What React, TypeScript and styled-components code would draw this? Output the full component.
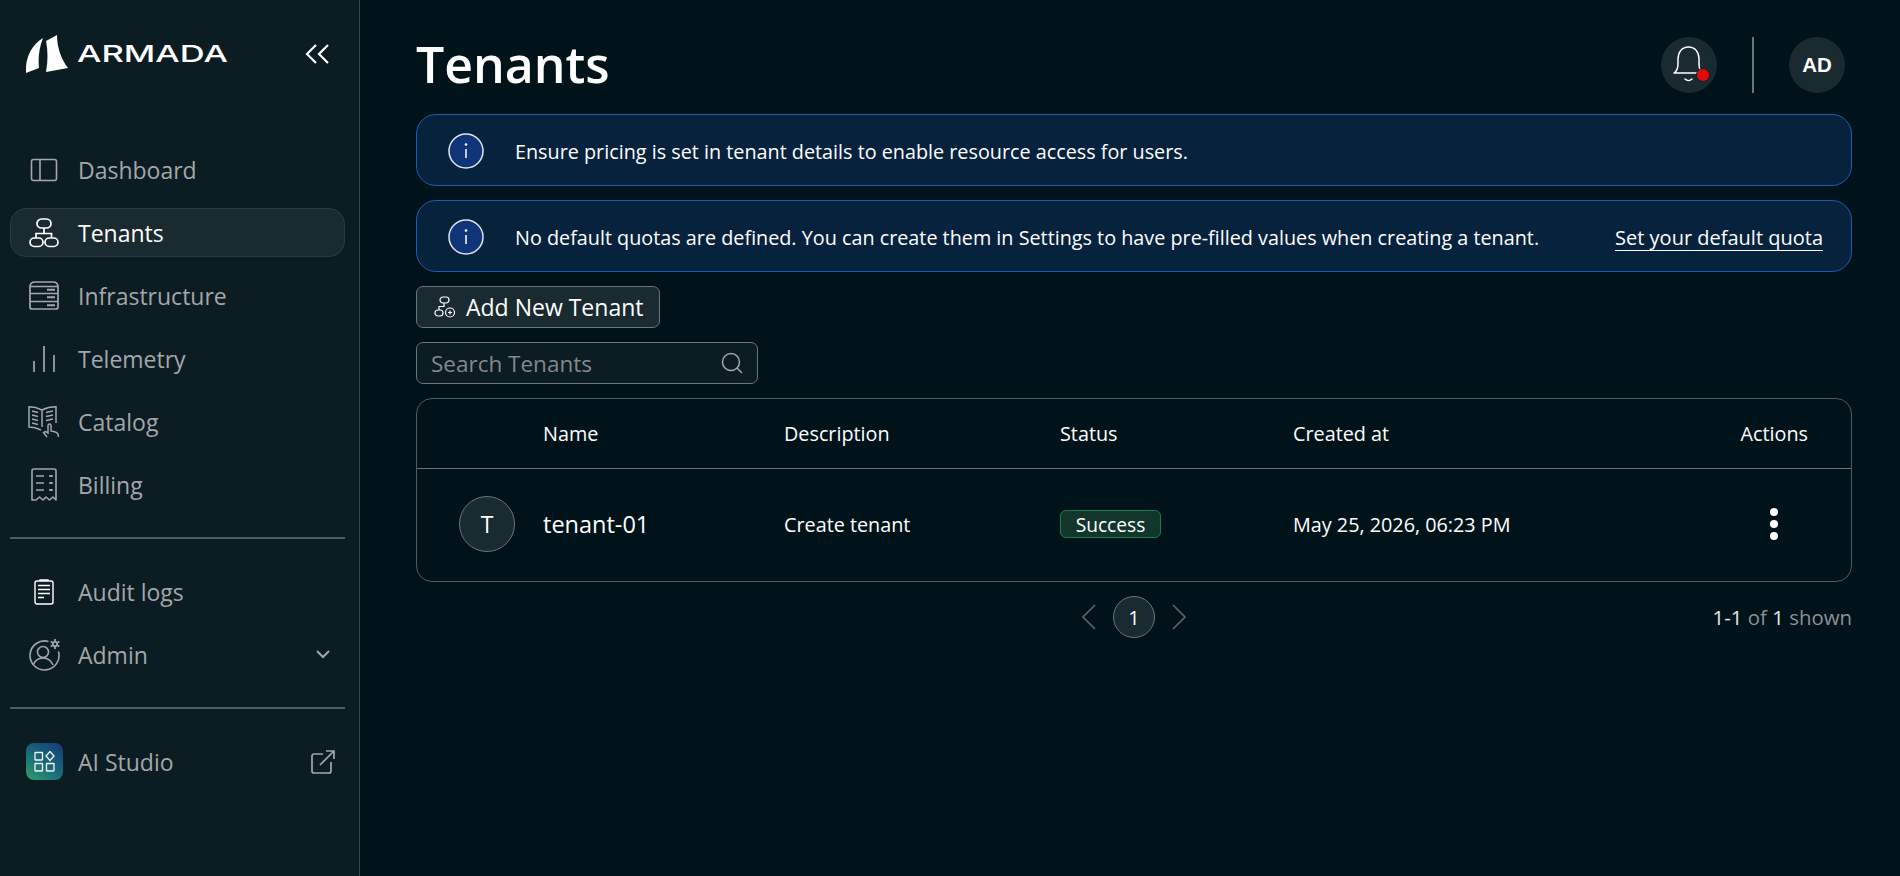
import React from 'react';
import styled, { createGlobalStyle } from 'styled-components';

const font = `"Open Sans", "Noto Sans", sans-serif`;

const GlobalStyle = createGlobalStyle`
  html, body {
    margin: 0;
    padding: 0;
    height: 100%;
    background: #01131a;
    font-family: ${font};
    color: #fff;
  }
  * { box-sizing: border-box; }
`;

const Page = styled.div`
  display: flex;
  width: 1900px;
  height: 876px;
  overflow: hidden;
`;

const Sidebar = styled.aside`
  width: 360px;
  flex-shrink: 0;
  padding: 0 14px 0 10px;
  background: #0c1c23;
  border-right: 1px solid #3b464b;
`;

const LogoRow = styled.div`
  display: flex;
  align-items: center;
  height: 108px;
  margin-bottom: 37px;
  padding: 0 16px;
`;

const LogoText = styled.span`
  display: inline-block;
  width: 104px;
  margin-left: 8px;
  font-family: Inter, "Liberation Sans", sans-serif;
  font-weight: 500;
  font-size: 23px;
  line-height: 1;
  transform: scaleX(1.5);
  transform-origin: left center;
`;

const Collapse = styled.button`
  display: flex;
  margin-left: auto;
  padding: 0;
  border: 0;
  background: none;
`;

const NavList = styled.nav`
  display: flex;
  flex-direction: column;
  gap: 14px;
`;

const NavItem = styled.div<{ $active?: boolean }>`
  display: flex;
  align-items: center;
  height: 49px;
  padding: 0 9px 0 9px;
  border: 1px solid ${p => (p.$active ? '#2e3a40' : 'transparent')};
  border-radius: 16px;
  background: ${p => (p.$active ? '#1a2a31' : 'transparent')};
  color: ${p => (p.$active ? '#ffffff' : '#a3a7a9')};
  font-size: 23px;
`;

const NavIcon = styled.span`
  display: flex;
  justify-content: center;
  align-items: center;
  width: 48px;
  margin-right: 10px;
`;

const NavLabel = styled.span`
  flex: 1;
`;

const Divider = styled.hr`
  margin: 28px 0;
  border: 0;
  border-top: 2px solid #545b5f;
`;

const Main = styled.main`
  flex: 1;
  display: flex;
  flex-direction: column;
  gap: 14px;
  padding: 37px 48px 0 56px;
`;

const Header = styled.header`
  display: flex;
  align-items: center;
  height: 56px;
  margin-bottom: 7px;
  padding-right: 7px;
`;

const Title = styled.h1`
  flex: 1;
  margin: 0 0 2px;
  font-size: 50px;
  font-weight: 600;
  line-height: 54px;
`;

const RoundButton = styled.div`
  position: relative;
  display: flex;
  justify-content: center;
  align-items: center;
  width: 56px;
  height: 56px;
  border-radius: 50%;
  background: #1a2a31;
  font-family: "Liberation Sans", sans-serif;
  font-weight: 700;
  font-size: 20.5px;
`;

const HeaderRule = styled.div`
  width: 2px;
  height: 56px;
  margin: 0 35px;
  background: #6d7477;
`;

const Alert = styled.div`
  display: flex;
  align-items: center;
  height: 72px;
  padding: 2px 28px 0 31px;
  border: 1px solid #1f5cb0;
  border-radius: 20px;
  background: #06223d;
  font-size: 19.8px;
`;

const AlertText = styled.span`
  flex: 1;
  margin-left: 31px;
`;

const AlertLink = styled.a`
  color: #fff;
  font-size: 20px;
  text-decoration: underline;
  text-underline-offset: 5px;
  text-decoration-thickness: 1px;
`;

const AddButton = styled.button`
  display: flex;
  align-items: center;
  gap: 10px;
  align-self: flex-start;
  width: 244px;
  height: 42px;
  padding: 0 0 0 17px;
  border: 1px solid #6d7477;
  border-radius: 7px;
  background: #1a2a31;
  color: #fff;
  font-family: ${font};
  font-size: 23px;
`;

const SearchBox = styled.div`
  display: flex;
  align-items: center;
  justify-content: space-between;
  width: 342px;
  height: 42px;
  padding: 0 14px 0 14px;
  border: 1px solid #6d7477;
  border-radius: 7px;
  background: #0c1c23;
  color: #84898b;
  font-size: 22.5px;
`;

const Table = styled.div`
  border: 1px solid #54595b;
  border-radius: 16px;
`;

const columns = '126px 241px 276px 233px 1fr auto';

const HeadRow = styled.div`
  display: grid;
  grid-template-columns: ${columns};
  align-items: center;
  height: 70px;
  border-bottom: 1px solid #6d7477;
  font-size: 19.8px;
`;

const BodyRow = styled.div`
  display: grid;
  grid-template-columns: ${columns};
  align-items: center;
  height: 112px;
  padding-bottom: 2px;
  font-size: 19.8px;
`;

const ActionsCell = styled.div`
  padding-right: 43px;
`;

const DotsCell = styled.div`
  display: flex;
  flex-direction: column;
  gap: 4px;
  margin-right: 73px;
`;

const Dot = styled.span`
  width: 8px;
  height: 8px;
  border-radius: 50%;
  background: #fff;
`;

const AvatarCell = styled.div`
  padding-left: 42px;
`;

const Avatar = styled.div`
  display: flex;
  justify-content: center;
  align-items: center;
  width: 56px;
  height: 56px;
  border: 1px solid #6d7477;
  border-radius: 50%;
  background: #1a2a31;
  font-size: 23px;
`;

const TenantName = styled.div`
  font-size: 23.5px;
`;

const Badge = styled.span`
  display: inline-flex;
  justify-content: center;
  align-items: center;
  width: 101px;
  height: 28px;
  border: 1px solid #1f7a4a;
  border-radius: 6px;
  background: #12352c;
  font-size: 19.2px;
`;

const Pager = styled.div`
  display: grid;
  grid-template-columns: 1fr auto 1fr;
  align-items: center;
  height: 42px;
`;

const PagerCenter = styled.div`
  display: flex;
  align-items: center;
  gap: 17px;
`;

const PageNumber = styled.div`
  display: flex;
  justify-content: center;
  align-items: center;
  width: 42px;
  height: 42px;
  border: 1px solid #6d7477;
  border-radius: 50%;
  background: #1a2a31;
  font-size: 20px;
`;

const Shown = styled.div`
  justify-self: end;
  color: #8c9194;
  font-size: 20.4px;

  b {
    color: #e6e8e9;
    font-weight: 400;
  }
`;

const ChevronSlot = styled.span`
  display: flex;
  margin-right: 5px;
`;

const Grey = '#a3a7a9';

const DashboardIcon = () => (
  <svg width="28" height="24" viewBox="0 0 28 24" fill="none" stroke={Grey} strokeWidth="1.6">
    <rect x="1.5" y="1.5" width="25" height="21" rx="2" />
    <path d="M10 1.5v21" />
  </svg>
);

const TenantsIcon = () => (
  <svg width="30" height="30" viewBox="0 0 30 30" fill="none" stroke="#fff" strokeWidth="1.7">
    <rect x="8" y="1" width="14" height="9" rx="4.5" />
    <path d="M15 10v5.500M7 20v-4.500h15.500V20" />
    <rect x="1" y="20" width="13" height="8.500" rx="4.200" />
    <rect x="16" y="20" width="13" height="8.500" rx="4.200" />
  </svg>
);

const InfraIcon = () => (
  <svg width="30" height="29" viewBox="0 0 30 29" fill="none" stroke={Grey} strokeWidth="1.700">
    <path d="M1 26V6Q1 1 6 1H24Q29 1 29 6V26a2 2 0 0 1-2 2H3a2 2 0 0 1-2-2z" />
    <path d="M1 5.500h28M1 12.500h28M1 20.500h28" />
    <path d="M18 8.800h8M18 16.300h8M18 24.300h8" strokeWidth="2" />
  </svg>
);

const TelemetryIcon = () => (
  <svg width="24" height="28" viewBox="0 0 24 28" fill="none" stroke={Grey} strokeWidth="1.700">
    <path d="M2 16v11M12 1v26M22 10v17" />
  </svg>
);

const CatalogIcon = () => (
  <svg width="32" height="32" viewBox="0 0 32 32" fill="none" stroke={Grey} strokeWidth="1.500">
    <path d="M14 4C10 2 5 .8 1 .8V21c4 0 8 1 12 3" />
    <path d="M14 4c4-2 9-3.200 14-3.200V17" />
    <path d="M14 4v17" />
    <path d="M4 5l6 1.500M4 9l6 1.500M4 13l6 1.500M4 17l6 1.500M18 6.500L25 5M18 10.500L25 9M18 14.500L25 13" />
    <path d="M19 31l-3.500-4.500 2-1 2.500 1.500v-7.500c0-2 3-2 3 0v5.500l3.500.7c2.500.5 4 2.500 4 5.300" />
  </svg>
);

const BillingIcon = () => (
  <svg width="28" height="34" viewBox="0 0 28 34" fill="none" stroke={Grey} strokeWidth="1.6">
    <path d="M2 32V3a2 2 0 0 1 2-2h20a2 2 0 0 1 2 2v29l-3-3-3.500 3-3.500-3-3 3-3.500-3-3.500 3z" strokeLinejoin="round" />
    <path d="M6 8h8M6 15h8M6 22h8" />
    <path d="M20 8h2M20 15h2M20 22h2" strokeLinecap="round" strokeWidth="2" />
  </svg>
);

const AuditIcon = () => (
  <svg width="20" height="26" viewBox="0 0 20 26" fill="none" stroke="#fff" strokeWidth="1.400">
    <rect x="1" y="2" width="18" height="23" rx="2" />
    <path d="M6 2V1h8v1M4 6.500h12M4 10.500h12M4 14.500h12M4 18.500h6" />
  </svg>
);

const AdminIcon = () => (
  <svg width="32" height="32" viewBox="0 0 32 32" fill="none" stroke={Grey} strokeWidth="1.600">
    <path d="M20.500 2.500a14.500 14.500 0 1 0 10 10" />
    <circle cx="15" cy="13" r="5.500" />
    <path d="M5 26c2-5 6-7 10-7s8 2 10 7" />
    <circle cx="27" cy="5" r="2.200" strokeWidth="1.800" />
    <path d="M27 0v2M27 8v2M22.700 2.500l1.700 1M29.600 6.500l1.700 1M31.300 2.500l-1.700 1M24.400 6.500l-1.700 1" strokeWidth="1.800" />
  </svg>
);

const StudioBadge = styled.span`
  display: flex;
  justify-content: center;
  align-items: center;
  width: 37px;
  height: 37px;
  border-radius: 8px;
  background: linear-gradient(35deg, #2f9e6b 0%, #1b6b7a 45%, #123a78 100%);
`;

const StudioIcon = () => (
  <StudioBadge>
    <svg width="21" height="21" viewBox="0 0 21 21" fill="none" stroke="#f2f5f5" strokeWidth="1.300">
      <rect x="1" y="1.500" width="7.500" height="7.500" rx="0.500" />
      <rect x="1" y="12.500" width="7.500" height="7.500" rx="0.500" />
      <rect x="12.500" y="12.500" width="7.500" height="7.500" rx="0.500" />
      <path d="M16 .5l4 4.500-4 4.500-4-4.500z" />
    </svg>
  </StudioBadge>
);

const ChevronsLeft = () => (
  <svg width="24" height="20" viewBox="0 0 24 20" fill="none" stroke="#fff" strokeWidth="2.200">
    <path d="M11 1L2 10l9 9M23 1l-9 9 9 9" />
  </svg>
);

const ChevronDown = () => (
  <svg width="14" height="9" viewBox="0 0 14 9" fill="none" stroke={Grey} strokeWidth="2">
    <path d="M1 1l6 6 6-6" />
  </svg>
);

const ExternalIcon = () => (
  <svg width="24" height="24" viewBox="0 0 24 24" fill="none" stroke={Grey} strokeWidth="1.700">
    <path d="M12 4H3a2 2 0 0 0-2 2v15a2 2 0 0 0 2 2h15a2 2 0 0 0 2-2v-9" />
    <path d="M9 15L23 1M15 1h8v8" />
  </svg>
);

const BellIcon = () => (
  <svg width="32" height="38" viewBox="0 0 32 38" fill="none" stroke="#fff" strokeWidth="1.500">
    <path d="M1 27c3-2 4-4 4-9V13C5 6 9 1 15.500 1S26 6 26 13v5c0 5 1 7 4 9z" strokeLinejoin="round" />
    <path d="M12 33c2 2 5 2 7 0" strokeLinecap="round" />
  </svg>
);

const RedDot = styled.span`
  position: absolute;
  left: 35px;
  top: 31px;
  width: 14px;
  height: 14px;
  border: 1.500px solid #101c22;
  border-radius: 50%;
  background: #e00a0a;
`;

const InfoIcon = () => (
  <svg width="36" height="36" viewBox="0 0 36 36">
    <circle cx="18" cy="18" r="17" fill="#0f3578" stroke="#dfe6ee" strokeWidth="1.500" />
    <circle cx="18" cy="11.500" r="1.300" fill="#fff" />
    <path d="M18 16v9" stroke="#fff" strokeWidth="1.500" />
  </svg>
);

const AddTenantIcon = () => (
  <svg width="22" height="22" viewBox="0 0 22 22" fill="none" stroke="#fff" strokeWidth="1.200">
    <rect x="6" y="1" width="9" height="6" rx="3" />
    <path d="M10 7v3.500H5V14" />
    <rect x="1" y="14" width="8" height="6" rx="3" />
    <circle cx="16" cy="16.500" r="4.500" />
    <path d="M16 14.500v4M14 16.500h4" />
  </svg>
);

const SearchIcon = () => (
  <svg width="22" height="22" viewBox="0 0 22 22" fill="none" stroke="#a3a7a9" strokeWidth="1.500">
    <circle cx="10" cy="10" r="8.500" />
    <path d="M16 16l5 5" />
  </svg>
);

const PagerChevron = ({ right }: { right?: boolean }) => (
  <svg width="14" height="26" viewBox="0 0 14 26" fill="none" stroke="#5a6468" strokeWidth="1.700">
    <path d={right ? 'M1 1l12 12L1 25' : 'M13 1L1 13l12 12'} />
  </svg>
);

const Logo = () => (
  <svg width="43" height="40" viewBox="26 33 43 40" fill="#fff">
    <path d="M26 72C25 58 31 44 43 37C39 47 38 57 39 67Z" />
    <path d="M57 34C57 46 61 58 68 67L46 71C48 60 48 50 46 40Z" />
  </svg>
);

const topItems = [
  { label: 'Dashboard', icon: <DashboardIcon /> },
  { label: 'Tenants', icon: <TenantsIcon />, active: true },
  { label: 'Infrastructure', icon: <InfraIcon /> },
  { label: 'Telemetry', icon: <TelemetryIcon /> },
  { label: 'Catalog', icon: <CatalogIcon /> },
  { label: 'Billing', icon: <BillingIcon /> },
];

export default function App() {
  return (
    <>
      <GlobalStyle />
      <Page>
        <Sidebar>
          <LogoRow>
            <Logo />
            <LogoText>ARMADA</LogoText>
            <Collapse>
              <ChevronsLeft />
            </Collapse>
          </LogoRow>
          <NavList>
            {topItems.map(item => (
              <NavItem key={item.label} $active={item.active}>
                <NavIcon>{item.icon}</NavIcon>
                <NavLabel>{item.label}</NavLabel>
              </NavItem>
            ))}
          </NavList>
          <Divider />
          <NavList>
            <NavItem>
              <NavIcon>
                <AuditIcon />
              </NavIcon>
              <NavLabel>Audit logs</NavLabel>
            </NavItem>
            <NavItem>
              <NavIcon>
                <AdminIcon />
              </NavIcon>
              <NavLabel>Admin</NavLabel>
              <ChevronSlot>
                <ChevronDown />
              </ChevronSlot>
            </NavItem>
          </NavList>
          <Divider />
          <NavItem>
            <NavIcon>
              <StudioIcon />
            </NavIcon>
            <NavLabel>AI Studio</NavLabel>
            <ExternalIcon />
          </NavItem>
        </Sidebar>
        <Main>
          <Header>
            <Title>Tenants</Title>
            <RoundButton>
              <BellIcon />
              <RedDot />
            </RoundButton>
            <HeaderRule />
            <RoundButton>AD</RoundButton>
          </Header>
          <Alert>
            <InfoIcon />
            <AlertText>Ensure pricing is set in tenant details to enable resource access for users.</AlertText>
          </Alert>
          <Alert>
            <InfoIcon />
            <AlertText>
              No default quotas are defined. You can create them in Settings to have pre-filled values when creating a tenant.
            </AlertText>
            <AlertLink>Set your default quota</AlertLink>
          </Alert>
          <AddButton>
            <AddTenantIcon />
            Add New Tenant
          </AddButton>
          <SearchBox>
            Search Tenants
            <SearchIcon />
          </SearchBox>
          <Table>
            <HeadRow>
              <div />
              <div>Name</div>
              <div>Description</div>
              <div>Status</div>
              <div>Created at</div>
              <ActionsCell>Actions</ActionsCell>
            </HeadRow>
            <BodyRow>
              <AvatarCell>
                <Avatar>T</Avatar>
              </AvatarCell>
              <TenantName>tenant-01</TenantName>
              <div>Create tenant</div>
              <div>
                <Badge>Success</Badge>
              </div>
              <div>May 25, 2026, 06:23 PM</div>
              <DotsCell>
                <Dot />
                <Dot />
                <Dot />
              </DotsCell>
            </BodyRow>
          </Table>
          <Pager>
            <div />
            <PagerCenter>
              <PagerChevron />
              <PageNumber>1</PageNumber>
              <PagerChevron right />
            </PagerCenter>
            <Shown>
              <b>1-1</b> of <b>1</b> shown
            </Shown>
          </Pager>
        </Main>
      </Page>
    </>
  );
}
